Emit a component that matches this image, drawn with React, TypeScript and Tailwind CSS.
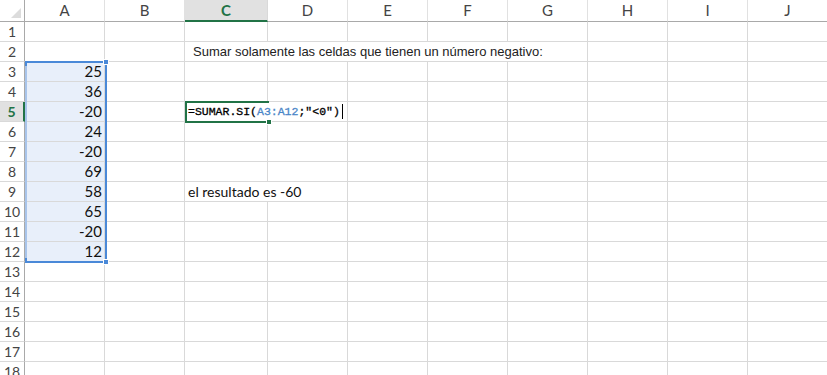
import React from "react";

const cols = ["A", "B", "C", "D", "E", "F", "G", "H", "I", "J"];
const values: Record<number, string> = {
  3: "25",
  4: "36",
  5: "-20",
  6: "24",
  7: "-20",
  8: "69",
  9: "58",
  10: "65",
  11: "-20",
  12: "12",
};

const line = "border-r border-b border-[#d9d9d9]";

function Row({ n }: { n: number }) {
  const active = n === 5;
  const inRange = n >= 3 && n <= 12;
  const cells: React.ReactNode[] = [];

  cells.push(
    <div
      key="h"
      className={
        active
          ? "flex items-center justify-center bg-[#e1e1e1] border-r-2 border-r-[#217346] border-b border-b-[#d9d9d9] text-[#217346] font-bold text-[14px]"
          : "flex items-center justify-center border-r border-r-[#a9a9a9] border-b border-b-[#d9d9d9] text-[#444] text-[14px]"
      }
    >
      {n}
    </div>
  );

  cells.push(
    <div
      key="A"
      className={`${line} flex items-center justify-end pr-[2px] text-[15px] text-[#111] ${inRange ? "bg-[#e8effa]" : ""}`}
    >
      {values[n] ?? ""}
    </div>
  );
  cells.push(<div key="B" className={line} />);

  let start = 2;
  if (n === 2) {
    cells.push(
      <div key="C" className={`${line} col-span-5 flex items-center pl-[8px] whitespace-nowrap text-[13px] text-[#222] font-['Liberation_Sans',sans-serif]`}>
        Sumar solamente las celdas que tienen un número negativo:
      </div>
    );
    start = 7;
  } else if (n === 5) {
    cells.push(
      <div key="C" className={`${line} col-span-2 flex items-center pl-[3px] whitespace-nowrap text-[11.5px] text-black font-['Liberation_Mono',monospace] [-webkit-text-stroke:0.3px_currentColor]`}>
        =SUMAR.SI(<span className="text-[#4a86c8]">A3:A12</span>;"&lt;0")
        <span className="ml-[2px] inline-block w-px h-[15px] bg-black" />
      </div>
    );
    start = 4;
  } else if (n === 9) {
    cells.push(
      <div key="C" className={`${line} col-span-2 flex items-center pl-[3px] whitespace-nowrap text-[14px] text-[#111]`}>
        el resultado es -60
      </div>
    );
    start = 4;
  }
  for (let c = start; c < cols.length; c++) {
    cells.push(<div key={cols[c]} className={line} />);
  }
  return <>{cells}</>;
}

export default function App() {
  const rows = Array.from({ length: 18 }, (_, i) => i + 1);
  return (
    <div className="relative w-[827px] h-[375px] overflow-hidden bg-white font-['Lato',sans-serif]">
      <div className="grid grid-cols-[25px_80px_80px_83px_repeat(7,80px)] grid-rows-[22px_repeat(18,20px)]">
        <div className="relative border-r border-r-[#a9a9a9] border-b border-b-[#a9a9a9]">
          <svg className="absolute right-[3px] bottom-[3px]" width="10" height="10" viewBox="0 0 10 10">
            <polygon points="10,0 10,10 0,10" fill="#dcdcdc" />
          </svg>
        </div>
        {cols.map((c) =>
          c === "C" ? (
            <div
              key={c}
              className="flex items-center justify-center bg-[#e1e1e1] border-r border-r-[#d9d9d9] border-b-2 border-b-[#217346] text-[#217346] font-bold text-[15px]"
            >
              {c}
            </div>
          ) : (
            <div
              key={c}
              className="flex items-center justify-center border-r border-r-[#e1e1e1] border-b border-b-[#a9a9a9] text-[#444] text-[15px]"
            >
              {c}
            </div>
          )
        )}
        {rows.map((n) => (
          <Row key={n} n={n} />
        ))}
      </div>

      {/* range reference A3:A12 */}
      <div className="absolute left-[25px] top-[61px] w-[82px] h-[202px] border-2 border-[#4a89d8] border-l-[#a8c4ea] pointer-events-none">
        <div className="absolute -right-[4px] -top-[4px] w-[6px] h-[6px] bg-[#4a89d8] border border-white" />
        <div className="absolute -right-[4px] -bottom-[4px] w-[6px] h-[6px] bg-[#4a89d8] border border-white" />
        <div className="absolute -left-[2px] -top-[2px] w-[2px] h-[5px] bg-[#4a89d8]" />
        <div className="absolute -left-[2px] -bottom-[2px] w-[2px] h-[5px] bg-[#4a89d8]" />
      </div>

      {/* active cell C5, in edit mode: no right edge */}
      <div className="absolute left-[185px] top-[101px] w-[84px] h-[22px] border-2 border-r-0 border-[#217346] pointer-events-none">
        <div className="absolute -right-[3px] -bottom-[4px] w-[6px] h-[6px] bg-[#217346] border border-white" />
      </div>
    </div>
  );
}
